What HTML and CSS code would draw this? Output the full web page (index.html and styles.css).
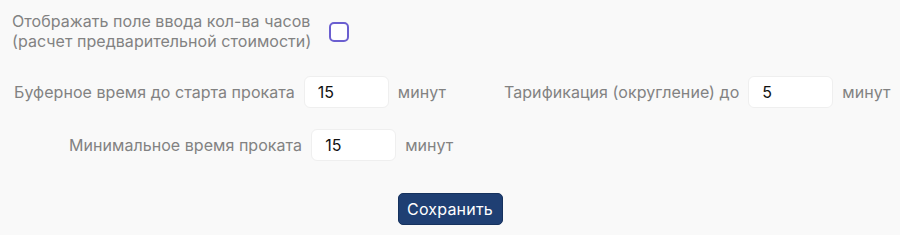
FILE: index.html
```html
<!DOCTYPE html>
<html lang="ru">

<head>
    <meta charset="UTF-8">
    <title>Настройки проката</title>
    <link rel="stylesheet" href="styles.css">
</head>

<body>
    <div class="settings">
        <div class="check-row">
            <label class="check-label" for="show-hours">Отображать поле ввода кол-ва часов<br>(расчет предварительной стоимости)</label>
            <input class="check" type="checkbox" id="show-hours">
        </div>
        <div class="row row-buffer">
            <div class="field">
                <span class="field-label">Буферное время до старта проката</span>
                <input class="field-input" type="text" value="15">
                <span class="field-unit">минут</span>
            </div>
            <div class="field field-tariff">
                <span class="field-label">Тарификация (округление) до</span>
                <input class="field-input" type="text" value="5">
                <span class="field-unit">минут</span>
            </div>
        </div>
        <div class="row row-min">
            <div class="field">
                <span class="field-label">Минимальное время проката</span>
                <input class="field-input" type="text" value="15">
                <span class="field-unit">минут</span>
            </div>
        </div>
        <div class="actions">
            <button class="btn-save">Сохранить</button>
        </div>
    </div>
</body>

</html>
```
FILE: styles.css
```css
* {
    box-sizing: border-box;
}

body {
    margin: 0;
    background: #f9f9f9;
    font-family: Inter, "Noto Sans", sans-serif;
    font-size: 16px;
    letter-spacing: 0.05px;
    color: #828282;
}

.settings {
    width: 900px;
    height: 235px;
    padding-top: 12px;
}

.check-row {
    display: flex;
    align-items: center;
    padding-left: 12px;
}

.check-label {
    line-height: 19.5px;
    white-space: nowrap;
}

.check {
    appearance: none;
    flex-shrink: 0;
    margin: 0 0 0 18px;
    width: 20px;
    height: 20px;
    border: 2px solid #6b5fd0;
    border-radius: 5px;
    background: #fff;
}

.row {
    display: flex;
    align-items: center;
}

.row-buffer {
    margin-top: 25px;
    padding-left: 14px;
}

.row-min {
    margin-top: 21px;
    padding-left: 69px;
}

.field {
    display: flex;
    align-items: center;
    flex-shrink: 0;
}

.field-label,
.field-unit {
    white-space: nowrap;
}

.field-tariff {
    margin-left: 58px;
}

.field-input {
    flex-shrink: 0;
    width: 85px;
    height: 32px;
    margin: 0 9px;
    padding: 0 13px;
    border: 1px solid #efefef;
    border-radius: 6px;
    background: #fff;
    font-family: inherit;
    font-size: 16px;
    color: #111;
    outline: none;
}

.actions {
    display: flex;
    justify-content: center;
    margin-top: 32px;
}

.btn-save {
    width: 105px;
    height: 32px;
    border: 1px solid #16325e;
    border-radius: 5px;
    background: #1f3f73;
    color: #fff;
    font-family: inherit;
    font-size: 16px;
    letter-spacing: 0.2px;
    cursor: pointer;
}
```
